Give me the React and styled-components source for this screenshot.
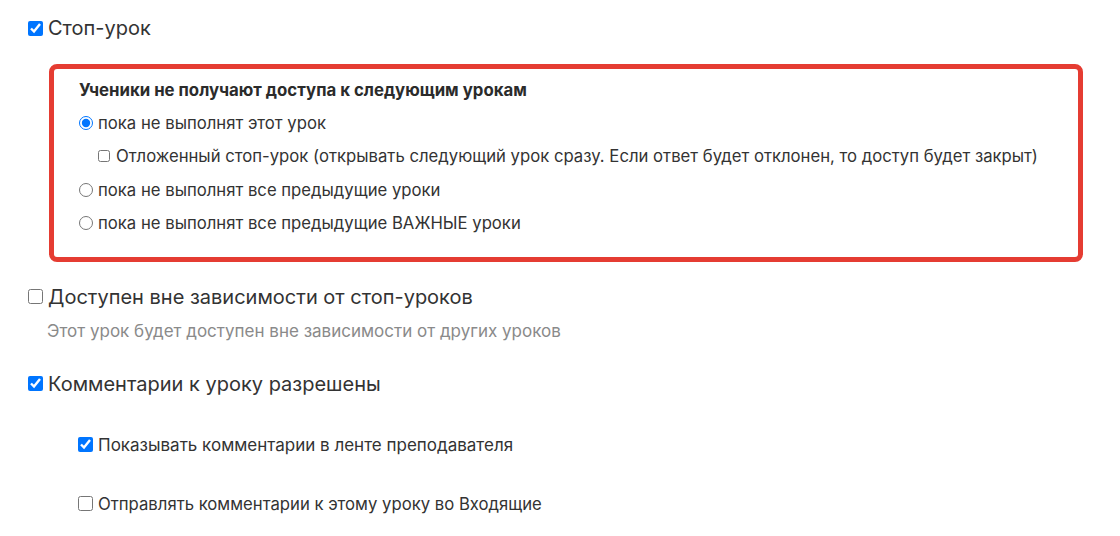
import React from 'react';
import styled, { createGlobalStyle } from 'styled-components';

const GlobalStyle = createGlobalStyle`
  body {
    margin: 0;
    background: #fff;
    font-family: Inter, "Noto Sans", Arial, sans-serif;
    color: #333;
  }
`;

const Page = styled.div`
  padding: 16px 0 0 28px;
`;

const Option = styled.label`
  display: flex;
  align-items: center;
  gap: ${(p) => p.$gap || 5}px;
  height: ${(p) => p.$height || 24}px;
  font-size: ${(p) => p.$size || 16.7}px;
  margin-left: ${(p) => p.$indent || 0}px;
  margin-top: ${(p) => p.$top || 0}px;
  color: #333;
  white-space: nowrap;
`;

const Check = styled.input.attrs({ type: 'checkbox' })`
  margin: 0;
  width: ${(p) => p.$box || 15}px;
  height: ${(p) => p.$box || 15}px;
  flex: none;
`;

const Radio = styled.input.attrs({ type: 'radio' })`
  margin: 0;
  width: 14px;
  height: 14px;
  flex: none;
`;

const StopBox = styled.div`
  margin: 24px 0 0 21px;
  width: 1034px;
  box-sizing: border-box;
  border: 5px solid #e53c32;
  border-radius: 8px;
  padding: 10.5px 20px 16.5px 25px;
`;

const BoxTitle = styled.div`
  height: 20px;
  line-height: 20px;
  font-size: 16.8px;
  font-weight: 700;
  color: #2b2b2b;
  margin-bottom: 6.5px;
`;

const Hint = styled.div`
  margin: 12px 0 0 19px;
  line-height: 20px;
  font-size: 17px;
  color: #8a8a8a;
`;

export default function App() {
  return (
    <>
      <GlobalStyle />
      <Page>
        <Option $size={20}>
          <Check defaultChecked />
          Стоп-урок
        </Option>

        <StopBox>
          <BoxTitle>Ученики не получают доступа к следующим урокам</BoxTitle>
          <Option $height={33.5}>
            <Radio name="stop" defaultChecked />
            пока не выполнят этот урок
          </Option>
          <Option $height={33.5} $indent={19} $gap={6}>
            <Check $box={12} />
            Отложенный стоп-урок (открывать следующий урок сразу. Если ответ будет отклонен, то доступ будет закрыт)
          </Option>
          <Option $height={33.5}>
            <Radio name="stop" />
            пока не выполнят все предыдущие уроки
          </Option>
          <Option $height={33.5}>
            <Radio name="stop" />
            пока не выполнят все предыдущие ВАЖНЫЕ уроки
          </Option>
        </StopBox>

        <Option $size={20} $top={23}>
          <Check />
          Доступен вне зависимости от стоп-уроков
        </Option>
        <Hint>Этот урок будет доступен вне зависимости от других уроков</Hint>

        <Option $size={20} $top={31}>
          <Check defaultChecked />
          Комментарии к уроку разрешены
        </Option>

        <Option $height={20} $top={39} $indent={50} $size={17}>
          <Check defaultChecked />
          Показывать комментарии в ленте преподавателя
        </Option>
        <Option $height={20} $top={39} $indent={50}>
          <Check />
          Отправлять комментарии к этому уроку во Входящие
        </Option>
      </Page>
    </>
  );
}
